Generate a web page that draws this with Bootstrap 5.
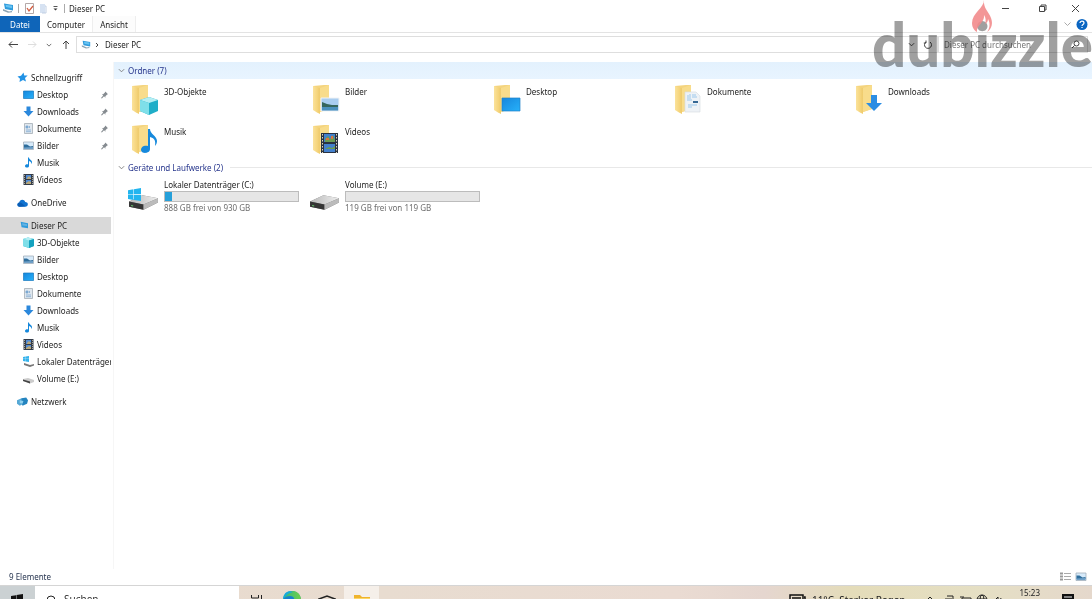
<!DOCTYPE html>
<html lang="de">
<head>
<meta charset="utf-8">
<meta name="viewport" content="width=device-width, initial-scale=1">
<title>Dieser PC</title>
<link rel="stylesheet" href="https://cdn.jsdelivr.net/npm/bootstrap@5.3.0/dist/css/bootstrap.min.css">
<style>
body{font:8px/17px "Noto Sans","Open Sans",sans-serif;color:#222;background:#fff}
a{color:inherit;text-decoration:none}
button{border:0;background:none;padding:0;color:inherit}
svg{display:block;flex:none}
.stroke{fill:none;stroke:#444;stroke-width:1}
.titlebar{height:16px;padding-left:2px}
.titlebar svg{margin-right:4px}
.divider{width:1px;height:9px;background:#aaa;margin-right:6px}
.ribbon{height:17px;border-bottom:1px solid #e3e3e3}
.ribbon a{height:16px;line-height:17px;text-align:center}
.tab-file{width:40px;background:#0f65b9;color:#fff}
.tab-computer{width:52px}
.tab-view{width:44px;background:#fcfcfc;border:solid #eee;border-width:0 1px}
.address{height:29px;padding:3px 4px 9px 8px}
.arrows{width:68px;padding-right:6px}
.pathbox{border:1px solid #dedede;height:17px;line-height:15px;padding-left:4px}
.searchbox{border:1px solid #dedede;height:17px;width:150px;padding:0 7px 0 5px}
.searchbox input{border:0;outline:0;background:none;width:110px;padding:0;line-height:15px}
.searchbox input::placeholder{color:#777;opacity:1}
.side{width:114px;border-right:1px solid #f6f6f6;padding:7px 2px 0 0}
.side ul{margin:0 0 6px}
.side li a{display:flex;align-items:center;height:17px;padding-left:23px;gap:3px;white-space:nowrap;overflow:hidden}
.side li.top a{padding-left:17px}
.side li.active a{background:#d9d9d9}
.side .pin{margin-left:auto;margin-right:3px}
.group-head{display:flex;align-items:center;gap:3px;height:17px;padding-left:4px;color:#26358c;margin:0;font-size:8px;line-height:17px;font-weight:400;width:100%}
.group-head.lit{background:linear-gradient(#e3f1fd,#e8f4ff)}
.rule{height:1px;background:#e8e8e8;flex:1;margin-left:4px}
.tiles{display:flex;flex-wrap:wrap;padding-left:14px}
.tile{display:flex;width:181px;height:40px;padding:4px 0 0 3px;gap:5px}
.tile svg{margin-top:1px}
.drive{gap:4px;padding:0;height:44px}
.drive svg{margin-top:12px}
.drive .info{width:135px}
.drive .cap{height:15px;line-height:17px}
.meter{height:11px;background:#e6e6e6;border:1px solid #bcbcbc}
.meter div{height:9px;background:#26a0da}
.free{color:#6d6d6d;line-height:12px}
.status{height:16px;line-height:15px;padding:0 5px 1px 9px;color:#26344f}
.taskbar{height:14px;flex:none;overflow:hidden;background:linear-gradient(90deg,#e9dacd 0,#e8dcd0 35%,#eadbd2 62%,#e5d6cf 70%,#e4dcb9 78%,#e5dfc4 90%,#e5d8cc);border-top:1px solid #d5d5d5;align-items:flex-start}
.start{width:35px;height:13px;background:#cbd1d3;padding:8px 0 0 11px}
.tasksearch{width:204px;height:13px;background:#fff;padding:5px 0 0 10px}
.tasksearch input{border:0;outline:0;background:none;font-size:10px;line-height:16px;width:120px;height:16px;padding:0}
.tasksearch input::placeholder{color:#333;opacity:1}
.tb{width:35px;height:13px;display:flex;justify-content:center;align-items:flex-start;padding-top:5px}
.tb.on{background:#f5efe9}
.glyph{margin-top:8px}
.weather{font-size:10px;line-height:16px;margin:6px 20px 0 6px}
.clock{line-height:14px;margin:0 22px 0 16px}
.note-icon{margin-right:18px}
.brand{position:absolute;right:-1px;top:0;color:#a0a0a0;mix-blend-mode:multiply;font:900 60px/88px Lato,sans-serif;pointer-events:none}
.flame{position:absolute;right:99px;top:0}
</style>
<script src="https://cdn.jsdelivr.net/npm/bootstrap@5.3.0/dist/js/bootstrap.bundle.min.js"></script>
</head>
<body class="vh-100 overflow-hidden d-flex flex-column position-relative">
<svg width="0" height="0" class="position-absolute" aria-hidden="true">
<defs>
<linearGradient id="fold"><stop stop-color="#fbe29a"/><stop offset="1" stop-color="#f1cc6a"/></linearGradient>
<linearGradient id="blue" x2="1" y2="1"><stop stop-color="#1686dc"/><stop offset="1" stop-color="#27b1fa"/></linearGradient>
<linearGradient id="metal" x2="1"><stop stop-color="#b8b8b8"/><stop offset="1" stop-color="#eee"/></linearGradient>
<linearGradient id="edge"><stop offset="0" stop-color="#31b981"/><stop offset="1" stop-color="#6fcf4a"/></linearGradient>
</defs>
<symbol id="pc" viewBox="0 0 12 12"><path d="M2 1.500l9 1.500v5.500L3 7z" fill="#2f9bdc"/><path d="M3.500 2.700l6.500 1v2.500L4 5z" fill="#66c3f2"/><path d="M1 7l6 2.500 3-.5v1.300l-4 .5-5-2z" fill="#8ca3b3"/></symbol>
<symbol id="star" viewBox="0 0 11 11"><path d="M6.500.5l.7 3 3.500 0-2.700 2.500L9 9.500 6 8 2.500 10 3 6.700.5 4.500 4 3.800z" fill="#2192e5"/></symbol>
<symbol id="desk" viewBox="0 0 11 11"><path d="M.5 2h10v7.500H.5z" fill="url(#blue)" stroke="#1878bd" stroke-width=".7"/></symbol>
<symbol id="down" viewBox="0 0 11 11"><path d="M3.500.5h4v4.500h3L5.500 10.500.5 5h3z" fill="#2b88dc"/></symbol>
<symbol id="doc" viewBox="0 0 11 11"><path d="M1.500.5h8v10h-8z" fill="#dfe7ee" stroke="#a4adb5" stroke-width=".8"/><path d="M3 3h2v2H3zM3 7h5M3 8.700h5M6.500 3v2" fill="#7aa9d4" stroke="#7faad2" stroke-width=".8"/></symbol>
<symbol id="pic" viewBox="0 0 11 11"><path d="M.5 2h10v7.500H.5z" fill="#d6eafa" stroke="#a2afba" stroke-width=".8"/><path d="M1 4.500l3 0 3 2 3-.5v2H1z" fill="#2f6e9c"/><path d="M1 7.500l9-.5v2H1z" fill="#6fa0c8"/></symbol>
<symbol id="note" viewBox="0 0 11 11"><path d="M5 .5h1c0 2 3 2.500 3 4.500 0 1.200-1 2-1 2 .5-2-.5-2.500-2-3V9c0 2-4 2-4 0 0-1.500 2-2 3-1.500z" fill="#1588dc"/></symbol>
<symbol id="film" viewBox="0 0 11 11"><path d="M.5 0h10v11H.5z" fill="#333b49"/><path d="M3 1h5v4H3zM3 6h5v4H3z" fill="#518bd4"/><path d="M4 4l2-2 2 2v1H4zM3 9l3-2 2 1v2H3z" fill="#b9a777"/><path d="M1.500 1v9M9.500 1v9" stroke="#a9a795" stroke-dasharray="1 1"/></symbol>
<symbol id="cube" viewBox="0 0 11 11"><path d="M0 2l5-1.500L11 2v7l-5 2-6-2z" fill="#21bbd2"/><path d="M0 2l6 1v8L0 9z" fill="#7fdfe9"/><path d="M0 2l5-1.500L11 2 6 3.500z" fill="#b4eef3"/><path d="M6 3.500L11 2v7l-5 2z" fill="#14a2bf"/></symbol>
<symbol id="cloud" viewBox="0 0 12 10"><path d="M3 9C-.5 9-.5 5 2.500 4.500 3 .5 8 .5 9 4c4 0 3.500 5 0 5z" fill="#1173d0"/><path d="M1 5.500c1.500-2 3-1 4.500 0L9 8.500 3 9C1 9 0 7 1 5.500z" fill="#0b5cb4"/></symbol>
<symbol id="disk" viewBox="0 0 30 18"><path d="M1 8L14 2l15 3v4L15 16 1 13z" fill="#777"/><path d="M1 8L14 2l15 3-14 6z" fill="url(#metal)"/><path d="M1 8l14 3v5L1 13z" fill="#353535"/><path d="M15 11l14-6v4l-14 7z" fill="#bbb"/><path d="M3 12l2 .5" stroke="#65c66b"/></symbol>
<symbol id="win" viewBox="0 0 12 12"><path d="M0 2l5-.8v4.500H0zM5.500 1.100l6.500-1.100v5.600H5.500zM0 6.200h5V11l-5-.8zM5.500 6.200H12V12l-6.500-.9z"/></symbol>
<symbol id="net" viewBox="0 0 12 11"><path d="M0 4l5-2 2 1v5L3 10 0 8z" fill="#55a8d5"/><path d="M5 2l5-1 2 3-1 4-5 2-1-3z" fill="#2484bf"/><path d="M3 4l4 1-1 3-3-1z" fill="#8fd0ef"/></symbol>
<symbol id="pin" viewBox="0 0 8 8"><path d="M5 0l3 3-1 .5-2 2V7L3.500 5.500 1 8 0 7.500 2.500 4.500 1 3h1.500l2-2z" fill="#858b90"/></symbol>
<symbol id="folder" viewBox="0 0 28 32"><path d="M1 2l11-1h5v24l-9 3z" fill="#f4d47e"/><path d="M1 2l7 2v26l-3-1.500L1 26z" fill="url(#fold)"/><path d="M8 4l9-3v24l-9 3z" fill="#f8dc8b"/><path d="M7 4v24" stroke="#ebca75" stroke-width=".5"/></symbol>
<symbol id="chev" viewBox="0 0 8 8"><path d="M1 2.500l3 3 3-3" class="stroke" style="stroke:inherit"/></symbol>
</svg>

<header>
<div class="titlebar d-flex align-items-center">
<svg width="12" height="12"><use href="#pc"/></svg><span class="divider"></span>
<button aria-label="Eigenschaften"><svg width="10" height="11" viewBox="0 0 10 11"><path d="M.5.500h8v10h-8z" fill="#fff" stroke="#b3a8a8"/><path d="M2 5l2 3 4-5" fill="none" stroke="#d45b3e" stroke-width="1.300"/></svg></button>
<button aria-label="Neuer Ordner"><svg width="8" height="11" viewBox="0 0 8 11"><path d="M1 1h5v9H1z" fill="#d6e2f2"/><path d="M6 3h1v7H3" fill="none" stroke="#c1cfe3"/></svg></button>
<button aria-label="Anpassen"><svg width="9" height="8" viewBox="0 0 9 8"><path d="M2.500 2.500h4" stroke="#555"/><path d="M2.500 4.500h4L4.500 6.500z" fill="#333"/></svg></button>
<span class="divider me-1"></span><span>Dieser PC</span>
<div class="ms-auto d-flex align-items-center">
<button aria-label="Minimieren" class="me-4"><svg width="8" height="9" viewBox="0 0 8 9"><path d="M0 4.500h7" class="stroke"/></svg></button>
<button aria-label="Verkleinern" class="me-3"><svg width="9" height="9" viewBox="0 0 9 9"><path d="M1.500 2.500h5v5h-5zM3 2V1h5v5H7" class="stroke"/></svg></button>
<button aria-label="Schließen" class="me-2 ms-1"><svg width="9" height="9" viewBox="0 0 9 9"><path d="M1 1l7 7M8 1L1 8" class="stroke"/></svg></button>
</div>
</div>
<nav class="ribbon d-flex">
<a href="#" class="tab-file">Datei</a><a href="#" class="tab-computer">Computer</a><a href="#" class="tab-view">Ansicht</a>
<div class="ms-auto d-flex align-items-center gap-1 pe-1"><svg width="9" height="8" stroke="#aaa"><use href="#chev"/></svg>
<button aria-label="Hilfe" class="me-n1"><svg width="12" height="13" viewBox="1 0 12 13"><circle cx="7" cy="6.500" r="5.500" fill="#0b66c2"/><path d="M5 5c0-2.500 4-2.500 4 0 0 1.500-2 1.500-2 3M7 9v1" fill="none" stroke="#fff" stroke-width="1.200"/></svg></button></div>
</nav>
<div class="address d-flex align-items-center">
<div class="arrows d-flex align-items-center justify-content-between">
<button aria-label="Zurück"><svg width="10" height="9" viewBox="0 0 10 9"><path d="M4 1.500l-3 3 3 3M1 4.500h9" class="stroke"/></svg></button>
<button aria-label="Vorwärts"><svg width="9" height="9" viewBox="0 0 9 9"><path d="M5 1.500l3 3-3 3M0 4.500h8" class="stroke" style="stroke:#ddd"/></svg></button>
<button aria-label="Verlauf"><svg width="6" height="6" stroke="#444"><use href="#chev"/></svg></button>
<button aria-label="Nach oben"><svg width="8" height="10" viewBox="0 0 8 10"><path d="M1 4l3-3 3 3M4 1v8" class="stroke"/></svg></button>
</div>
<div class="pathbox d-flex align-items-center flex-grow-1">
<svg width="10" height="11"><use href="#pc"/></svg><svg width="6" height="8" viewBox="0 0 6 8" class="ms-1"><path d="M1 2l2 2-2 2" class="stroke"/></svg><span class="ms-1">Dieser PC</span>
<button aria-label="Adressen" class="ms-auto me-1"><svg width="7" height="7" stroke="#333"><use href="#chev"/></svg></button>
<button aria-label="Aktualisieren" class="me-1 ms-1"><svg width="10" height="10" viewBox="0 0 10 10"><path d="M3 2a3.500 3.500 0 1 0 4 0M3 .5V3H.8" class="stroke"/></svg></button>
</div>
<div class="searchbox d-flex align-items-center justify-content-between"><input type="text" aria-label="Suche" placeholder="Dieser PC durchsuchen"><svg width="9" height="9" viewBox="0 0 9 9"><circle cx="5.500" cy="3.500" r="2.500" class="stroke"/><path d="M3.500 5.500L1 8" class="stroke"/></svg></div>
</div>
</header>

<div class="d-flex flex-grow-1" style="min-height:0">
<nav class="side flex-shrink-0">
<ul class="list-unstyled">
<li class="top"><a href="#"><svg width="11" height="11"><use href="#star"/></svg>Schnellzugriff</a></li>
<li><a href="#"><svg width="11" height="11"><use href="#desk"/></svg>Desktop<svg class="pin" width="7" height="8"><use href="#pin"/></svg></a></li>
<li><a href="#"><svg width="11" height="11"><use href="#down"/></svg>Downloads<svg class="pin" width="7" height="8"><use href="#pin"/></svg></a></li>
<li><a href="#"><svg width="11" height="11"><use href="#doc"/></svg>Dokumente<svg class="pin" width="7" height="8"><use href="#pin"/></svg></a></li>
<li><a href="#"><svg width="11" height="11"><use href="#pic"/></svg>Bilder<svg class="pin" width="7" height="8"><use href="#pin"/></svg></a></li>
<li><a href="#"><svg width="11" height="11"><use href="#note"/></svg>Musik</a></li>
<li><a href="#"><svg width="11" height="11"><use href="#film"/></svg>Videos</a></li>
</ul>
<ul class="list-unstyled"><li class="top"><a href="#"><svg width="11" height="10"><use href="#cloud"/></svg>OneDrive</a></li></ul>
<ul class="list-unstyled">
<li class="top active"><a href="#"><svg width="11" height="11" viewBox="-2 0 12 12"><path d="M2 2l8 1.500v5.500L3 8z" fill="#2f9bdc"/><path d="M3.500 3.500l5.500 1v2L4 6z" fill="#66b3e2"/></svg>Dieser PC</a></li>
<li><a href="#"><svg width="11" height="11"><use href="#cube"/></svg>3D-Objekte</a></li>
<li><a href="#"><svg width="11" height="11"><use href="#pic"/></svg>Bilder</a></li>
<li><a href="#"><svg width="11" height="11"><use href="#desk"/></svg>Desktop</a></li>
<li><a href="#"><svg width="11" height="11"><use href="#doc"/></svg>Dokumente</a></li>
<li><a href="#"><svg width="11" height="11"><use href="#down"/></svg>Downloads</a></li>
<li><a href="#"><svg width="11" height="11"><use href="#note"/></svg>Musik</a></li>
<li><a href="#"><svg width="11" height="11"><use href="#film"/></svg>Videos</a></li>
<li><a href="#"><svg width="11" height="11" viewBox="0 0 11 11"><use href="#win" width="6" height="6" fill="#35b3ec"/><path d="M1 7l6 2 4-1v1.500L7 11 1 9z" fill="#777"/></svg>Lokaler Datenträger</a></li>
<li><a href="#"><svg width="11" height="11" viewBox="0 0 11 11"><path d="M0 6l5-1 6 2v2l-4 1.500L0 8z" fill="#ccc"/><path d="M0 6.500l7 2v2L0 8z" fill="#444"/></svg>Volume (E:)</a></li>
</ul>
<ul class="list-unstyled"><li class="top"><a href="#"><svg width="11" height="11"><use href="#net"/></svg>Netzwerk</a></li></ul>
</nav>
<main class="flex-grow-1">
<button class="group-head lit"><svg width="7" height="7" stroke="#777"><use href="#chev"/></svg>Ordner (7)</button>
<div class="tiles">
<a href="#" class="tile"><svg width="28" height="32" viewBox="0 0 28 32"><use href="#folder"/><path d="M9 16l9-3 9 3v11l-9 4-9-4z" fill="#1faec8"/><path d="M9 16l9-3 9 3-9 3z" fill="#b4eef3"/><path d="M9 16l9 3v12l-9-4z" fill="#7fdfe9"/></svg>3D-Objekte</a>
<a href="#" class="tile"><svg width="28" height="32" viewBox="0 0 28 32"><use href="#folder"/><path d="M9 14h18v13H9z" fill="#a9cdf0" stroke="#f0f3f5"/><path d="M10 18l5 2 5 1 6 0v2H10z" fill="#36665c"/><path d="M10 23h16v3.500H10z" fill="#4c91bd"/></svg>Bilder</a>
<a href="#" class="tile"><svg width="28" height="32" viewBox="0 0 28 32"><use href="#folder"/><path d="M9 14h18v13H9z" fill="url(#blue)" stroke="#2183c7" stroke-width=".7"/></svg>Desktop</a>
<a href="#" class="tile"><svg width="28" height="32" viewBox="0 0 28 32"><use href="#folder"/><path d="M11 8h11l4 4v16H11z" fill="#eef2f6" stroke="#d9dee3" stroke-width=".7"/><path d="M14 11v4M16 10v5M13 16h5M18 11h4M18 13h5M14 21h9M14 23h4" stroke="#9cc8ec"/><path d="M19 17h5v2h-5z" fill="#356895"/></svg>Dokumente</a>
<a href="#" class="tile"><svg width="28" height="32" viewBox="0 0 28 32"><use href="#folder"/><path d="M16 11h6v8h5l-8 8-8-8h5z" fill="#2b8de3"/></svg>Downloads</a>
<a href="#" class="tile"><svg width="28" height="32" viewBox="0 0 28 32"><use href="#folder"/><path d="M17 5h2c0 5 7 7 7 12 0 2-1 4-2 5 1-6-1-8-5-9v12c0 5-9 5-9 1 0-4 4-5 7-4z" fill="#1689dc"/></svg>Musik</a>
<a href="#" class="tile"><svg width="28" height="32" viewBox="0 0 28 32"><use href="#folder"/><path d="M9 9h17v20H9z" fill="#293241"/><path d="M12 10h11v8H12zM12 20h11v8H12z" fill="#4380cd"/><path d="M13 15l3-3 2 3 3-4 2 5v2H13zM13 25l4-2 3 1 3-2v3H13z" fill="#6b9b53"/><path d="M14 14h3v2h-3zM19 12h2v3h-2z" fill="#db7242"/><path d="M10.500 10v19M24.500 10v19" stroke="#ddd5bd" stroke-dasharray="1.500 1.500"/></svg>Videos</a>
</div>
<button class="group-head"><svg width="7" height="7" stroke="#777"><use href="#chev"/></svg>Geräte und Laufwerke (2)<span class="rule"></span></button>
<div class="tiles">
<a href="#" class="tile drive"><svg width="32" height="24" viewBox="0 0 32 24"><use href="#disk" y="5" width="31" height="19"/><use href="#win" x="0" y="0" width="13" height="13" fill="#22b5ef"/></svg>
<div class="info"><div class="cap">Lokaler Datenträger (C:)</div><div class="meter"><div style="width:5%"></div></div><div class="free">888 GB frei von 930 GB</div></div></a>
<a href="#" class="tile drive"><svg width="32" height="24" viewBox="0 0 32 24"><use href="#disk" y="5" width="31" height="19"/></svg>
<div class="info"><div class="cap">Volume (E:)</div><div class="meter"></div><div class="free">119 GB frei von 119 GB</div></div></a>
</div>
</main>
</div>

<div class="status d-flex align-items-center"><span>9 Elemente</span>
<button aria-label="Details" class="ms-auto me-1"><svg width="11" height="10" viewBox="0 0 11 10"><path d="M0 1.500h3M0 4.500h3M0 7.500h3" stroke="#999" stroke-width="2"/><path d="M4 1.500h7M4 4.500h7M4 7.500h7" stroke="#aaa"/></svg></button>
<button aria-label="Kacheln"><svg width="12" height="11"><use href="#pic"/></svg></button></div>

<footer class="taskbar d-flex">
<button class="start" aria-label="Start"><svg width="12" height="12" fill="#111"><use href="#win"/></svg></button>
<div class="tasksearch d-flex align-items-start gap-2"><svg width="11" height="12" viewBox="0 0 11 12" class="mt-1"><circle cx="6" cy="5" r="4" class="stroke" style="stroke:#222"/><path d="M3 8L0 11" class="stroke"/></svg><input type="text" aria-label="Taskleiste durchsuchen" placeholder="Suchen"></div>
<button class="tb" aria-label="Aufgabenansicht"><svg width="13" height="12" viewBox="0 0 13 12" class="mt-1"><path d="M1.500 0v3h7V0M1.500 12V6h7v6M11.500 0v10" class="stroke" style="stroke:#222"/></svg></button>
<button class="tb" aria-label="Edge"><svg width="18" height="18" viewBox="0 0 18 18"><circle cx="9" cy="9" r="9" fill="#1681ce"/><path d="M3 3C7-2 17-1 18 8c0 4-5 4-7 2 1-3-1-5-4-5S2 6 0 8z" fill="url(#edge)"/><path d="M0 9C0 1 6-1 10 1 5 2 2 5 0 9z" fill="#17aada"/></svg></button>
<button class="tb" aria-label="Store"><svg width="18" height="16" viewBox="0 0 18 16" class="mt-1"><path d="M1 4l8-3 8 3-8 3zM2 5v8h14V5" class="stroke" style="stroke:#222;stroke-width:1.500"/></svg></button>
<button class="tb on" aria-label="Explorer"><svg width="16" height="14" viewBox="0 0 16 14" class="mt-1"><path d="M0 0h6l2 2h8v11H0z" fill="#efb42d"/><path d="M0 3h16v9H0z" fill="#fcd667"/></svg></button>
<div class="ms-auto d-flex align-items-start">
<svg width="17" height="14" viewBox="0 0 17 14" class="glyph"><path d="M1 1h13v11H1zM15 3h1v9M3 4h9M3 6h4M8 6h4" class="stroke" style="stroke:#111;stroke-width:1.500"/></svg>
<span class="weather">11°C&nbsp; Starker Regen</span>
<svg width="78" height="14" viewBox="0 0 78 14" class="glyph"><path d="M1 6l3-3 3 3M21 2h6v3M19 5h7v6h-7zM36 4h9v6h-9zM34 3h4M75 4l-2 6M67 6h2l3-3v8" class="stroke" style="stroke:#222"/><g class="stroke" style="stroke:#222"><circle cx="56" cy="6" r="5"/><ellipse cx="56" cy="6" rx="2" ry="5"/><path d="M51 5h10"/></g></svg>
<span class="clock">15:23</span>
<svg width="12" height="12" viewBox="0 0 12 12" class="glyph note-icon"><path d="M0 0h12v10H0z" fill="#111"/><path d="M2 3h8M2 6h8" stroke="#eee"/></svg>
</div>
</footer>
<div class="brand" aria-hidden="true">dubizzle</div>
<svg class="flame" width="22" height="35" viewBox="0 0 22 35" aria-hidden="true"><path d="M13 0C13 8 1 13 1 23c0 5 3 8 5 9-1-7 8-9 7-17 2 3 2 6 1 9 2-1 3-3 3-5 3 5 1 11-1 13 5-3 6-9 4-14C18 12 12 8 13 0z" fill="#f28b8c" opacity=".9"/></svg>
</body>
</html>
